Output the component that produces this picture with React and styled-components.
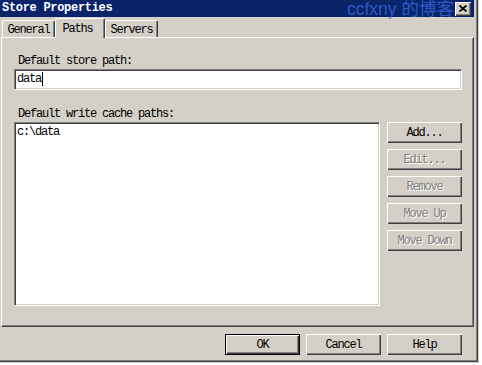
import React from 'react';
import styled, { createGlobalStyle } from 'styled-components';

const FONT = `"Liberation Mono", "Noto Sans CJK SC", monospace`;

const Global = createGlobalStyle`
  html, body { margin: 0; padding: 0; background: #ffffff; }
  body { font-family: ${FONT}; }
`;

const Window = styled.div`
  position: relative;
  width: 479px;
  height: 363px;
  box-sizing: border-box;
  background: #d4d0c8;
  padding: 0 5px 3px 0;
  box-shadow: inset -1px -1px 0 #d4d0c8, inset -2px -2px 0 #404040, inset -3px -3px 0 #808080;
  display: flex;
  flex-direction: column;
  font-family: ${FONT};
  font-size: 12px;
  letter-spacing: -1.2px;
  color: #000;
`;

const TitleBar = styled.div`
  height: 17px;
  flex: none;
  background: #0a246a;
  display: flex;
  align-items: center;
  justify-content: space-between;
  padding: 0 3px 0 2px;
  box-sizing: border-box;
`;

const Title = styled.div`
  color: #fff;
  font-weight: bold;
  font-size: 12px;
  letter-spacing: -0.3px;
  line-height: 17px;
`;

const CloseButton = styled.div`
  width: 16px;
  height: 14px;
  box-sizing: border-box;
  background: #d4d0c8;
  box-shadow: inset 1px 1px 0 #fff, inset -1px -1px 0 #404040, inset -2px -2px 0 #808080;
  display: flex;
  align-items: center;
  justify-content: center;
  padding: 0 1px 1px 0;
`;

const Watermark = styled.div`
  position: absolute;
  left: 347px;
  top: -2px;
  font-family: "Liberation Sans", "Noto Sans CJK SC", sans-serif;
  font-size: 17.5px;
  letter-spacing: 0;
  line-height: 22px;
  color: rgba(62, 112, 235, 0.72);
  pointer-events: none;
  white-space: nowrap;
  z-index: 5;
`;

const Body = styled.div`
  flex: 1;
  display: flex;
  flex-direction: column;
  padding-left: 1px;
  min-height: 0;
`;

const TabRow = styled.div`
  height: 20px;
  flex: none;
  display: flex;
  align-items: flex-end;
  padding-left: 1px;
`;

const Tab = styled.div`
  position: relative;
  box-sizing: border-box;
  width: ${(p) => p.$w}px;
  height: ${(p) => (p.$active ? 20 : 17)}px;
  margin-bottom: ${(p) => (p.$active ? -1 : 0)}px;
  z-index: ${(p) => (p.$active ? 2 : 0)};
  background: #d4d0c8;
  border-top: 1px solid #fff;
  border-left: 1px solid #fff;
  border-right: 1px solid #404040;
  border-radius: 2px 2px 0 0;
  box-shadow: inset -1px 0 0 #808080;
  padding: ${(p) => (p.$active ? '3px 5px 0 0' : '2px 0 0 0')};
  line-height: 14px;
  text-align: center;
`;

const Panel = styled.div`
  height: 290px;
  box-sizing: border-box;
  flex: none;
  border-top: 1px solid #fff;
  border-left: 1px solid #fff;
  border-right: 1px solid #404040;
  border-bottom: 1px solid #404040;
  box-shadow: inset -1px -1px 0 #808080;
  padding: 16px 11px 20px 12px;
  display: flex;
  flex-direction: column;
`;

const Label = styled.div`
  line-height: 14px;
  height: 14px;
  padding-left: 4px;
  margin-top: ${(p) => p.$mt || 0}px;
`;

const Sunken = styled.div`
  box-sizing: border-box;
  background: #fff;
  border-style: solid;
  border-width: 1px;
  border-color: #808080 #fff #fff #808080;
  box-shadow: inset 1px 1px 0 #404040, inset -1px -1px 0 #d4d0c8;
  padding: 2px 2px;
  line-height: 15px;
`;

const TextField = styled(Sunken)`
  height: 21px;
  margin-top: 1px;
  display: flex;
  align-items: center;
  padding-top: 1px;
`;

const Caret = styled.span`
  display: inline-block;
  width: 1px;
  height: 14px;
  background: #000;
  margin-left: 1px;
`;

const ListRow = styled.div`
  margin-top: 1px;
  height: 184px;
  display: flex;
  gap: 7px;
`;

const ListBox = styled(Sunken)`
  flex: 1;
  padding-top: 2px;
  line-height: 14px;
`;

const SideButtons = styled.div`
  width: 75px;
  display: flex;
  flex-direction: column;
  gap: 6px;
`;

const Button = styled.div`
  width: 75px;
  height: 21px;
  box-sizing: border-box;
  background: #d4d0c8;
  display: flex;
  align-items: center;
  justify-content: center;
  line-height: 14px;
  padding-top: 1px;
  border: ${(p) => (p.$default ? '1px solid #000' : 'none')};
  box-shadow: inset 1px 1px 0 #fff, inset -1px -1px 0 #404040, inset -2px -2px 0 #808080;
  color: ${(p) => (p.$disabled ? '#808080' : '#000')};
  text-shadow: ${(p) => (p.$disabled ? '1px 1px 0 #fff' : 'none')};
  white-space: pre;
`;

const Footer = styled.div`
  height: 33px;
  flex: none;
  box-sizing: border-box;
  display: flex;
  justify-content: flex-end;
  align-items: flex-start;
  gap: 6px;
  padding: 7px 12px 0 0;
`;

const CloseGlyph = () => (
  <svg width="8" height="7" viewBox="0 0 8 7">
    <path d="M0.5 0.5L7.5 6.5M7.5 0.5L0.5 6.5" stroke="#000" strokeWidth="1.7" />
  </svg>
);

export default function App() {
  return (
    <>
      <Global />
      <Window>
        <TitleBar>
          <Title>Store Properties</Title>
          <CloseButton>
            <CloseGlyph />
          </CloseButton>
        </TitleBar>
        <Watermark>ccfxny 的博客</Watermark>
        <Body>
          <TabRow>
            <Tab $w={53}>General</Tab>
            <Tab $w={50} $active>Paths</Tab>
            <Tab $w={53}>Servers</Tab>
          </TabRow>
          <Panel>
            <Label>Default store path:</Label>
            <TextField>
              data<Caret />
            </TextField>
            <Label $mt={17}>Default write cache paths:</Label>
            <ListRow>
              <ListBox>c:\data</ListBox>
              <SideButtons>
                <Button>Add...</Button>
                <Button $disabled>Edit...</Button>
                <Button $disabled>Remove</Button>
                <Button $disabled>Move Up</Button>
                <Button $disabled>Move Down</Button>
              </SideButtons>
            </ListRow>
          </Panel>
          <Footer>
            <Button $default>OK</Button>
            <Button>Cancel</Button>
            <Button>Help</Button>
          </Footer>
        </Body>
      </Window>
    </>
  );
}
